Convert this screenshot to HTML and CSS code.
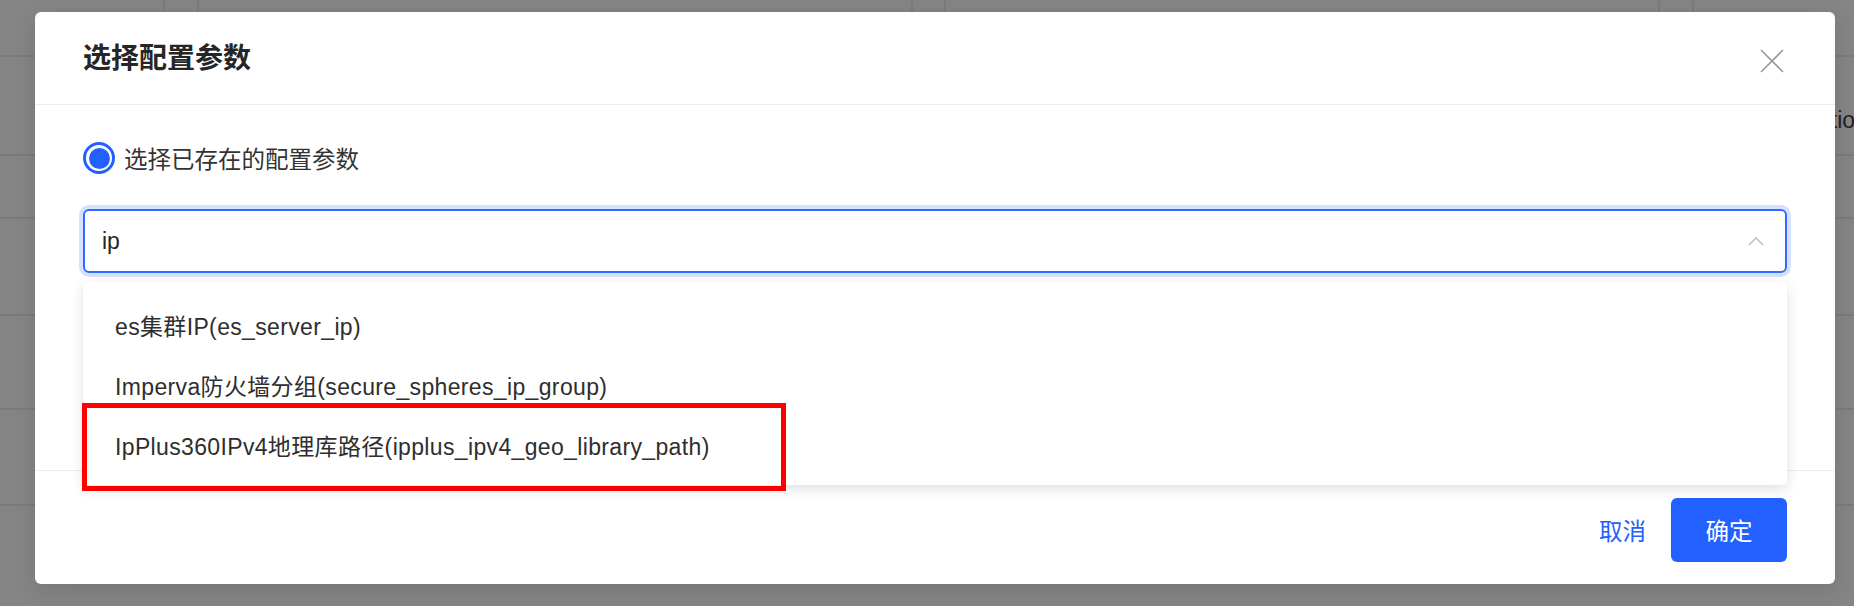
FILE: index.html
```html
<!DOCTYPE html>
<html lang="zh-CN">
<head>
<meta charset="utf-8">
<title>选择配置参数</title>
<link rel="stylesheet" href="styles.css">
</head>
<body>
<div class="backdrop">
  <div class="bg-row"><div class="c c1"></div><div class="c c2"></div><div class="c c3"></div><div class="c c4"></div><div class="c c5"></div><div class="c c6"></div><div class="c c7"></div></div>
  <div class="bg-row r2"><div class="c c1"></div><div class="c c2"></div><div class="c c3"></div><div class="c c4"></div><div class="c c5"></div><div class="c c6"></div><div class="c c7"><span class="bg-text">Action</span></div></div>
  <div class="bg-row r3"><div class="c c1"></div><div class="c c2"></div><div class="c c3"></div><div class="c c4"></div><div class="c c5"></div><div class="c c6"></div><div class="c c7"></div></div>
  <div class="bg-row r4"><div class="c c1"></div><div class="c c2"></div><div class="c c3"></div><div class="c c4"></div><div class="c c5"></div><div class="c c6"></div><div class="c c7"></div></div>
  <div class="bg-row r5"><div class="c c1"></div><div class="c c2"></div><div class="c c3"></div><div class="c c4"></div><div class="c c5"></div><div class="c c6"></div><div class="c c7"></div></div>
  <div class="bg-row r6"><div class="c c1"></div><div class="c c2"></div><div class="c c3"></div><div class="c c4"></div><div class="c c5"></div><div class="c c6"></div><div class="c c7"></div></div>
</div>

<div class="modal">
  <div class="modal-header">
    <div class="modal-title">选择配置参数</div>
    <svg class="close-icon" width="24" height="24" viewBox="0 0 24 24" aria-label="关闭">
      <path d="M1 1 L23 23 M23 1 L1 23" stroke="#9a9a9a" stroke-width="1.6" fill="none"/>
    </svg>
  </div>
  <div class="modal-body">
    <label class="radio-row">
      <span class="radio"><span class="radio-dot"></span></span>
      <span class="radio-label">选择已存在的配置参数</span>
    </label>
    <div class="select-wrap">
      <div class="select">
        <span class="select-value">ip</span>
        <svg class="chevron" width="16" height="10" viewBox="0 0 16 10">
          <path d="M1 9 L8 2 L15 9" stroke="#c2c2c2" stroke-width="1.6" fill="none"/>
        </svg>
      </div>
      <div class="dropdown">
        <div class="option">es集群IP(es_server_ip)</div>
        <div class="option">Imperva防火墙分组(secure_spheres_ip_group)</div>
        <div class="option">IpPlus360IPv4地理库路径(ipplus_ipv4_geo_library_path)</div>
        <div class="highlight"></div>
      </div>
    </div>
  </div>
  <div class="modal-footer">
    <button class="btn-cancel">取消</button>
    <button class="btn-ok">确定</button>
  </div>
</div>
</body>
</html>
```

FILE: styles.css
```css
html, body {
  margin: 0;
  padding: 0;
}
body {
  width: 1854px;
  height: 606px;
  overflow: hidden;
  background: #858585;
  font-family: "Liberation Sans", "Noto Sans CJK SC", sans-serif;
  position: relative;
}

/* dimmed page behind the dialog */
.backdrop {
  display: flex;
  flex-direction: column;
  width: 1854px;
  height: 606px;
}
.bg-row {
  display: grid;
  grid-template-columns: 165px 34px 714px 33px 714px 34px 160px;
  height: 57px;
  border-bottom: 2px solid #7b7b7b;
  box-sizing: border-box;
}
.bg-row.r2 { height: 99px; }
.bg-row.r3 { height: 63px; }
.bg-row.r4 { height: 97px; }
.bg-row.r5 { height: 94px; }
.bg-row.r6 { height: 96px; }
.c {
  border-right: 2px solid #7b7b7b;
}
.c7 { border-right: none; }
.bg-text {
  display: block;
  padding: 50px 0 0 110px;
  font-size: 23px;
  color: #222;
  line-height: 26px;
}

/* dialog */
.modal {
  position: absolute;
  left: 35px;
  top: 12px;
  width: 1800px;
  height: 572px;
  background: #fff;
  border-radius: 6px;
  box-shadow: 0 6px 24px rgba(0, 0, 0, 0.12);
  display: flex;
  flex-direction: column;
}
.modal-header {
  height: 93px;
  box-sizing: border-box;
  border-bottom: 1px solid #ebebf2;
  padding: 0 51px 0 48px;
  display: flex;
  align-items: center;
  justify-content: space-between;
}
.modal-title {
  font-family: "Noto Sans CJK SC", sans-serif;
  font-size: 28px;
  font-weight: 700;
  color: #262626;
  line-height: 32px;
  margin-top: -4px;
}
.close-icon {
  display: block;
  margin-top: 5px;
}

.modal-body {
  flex: 1;
  padding: 37px 48px 0;
}
.radio-row {
  display: flex;
  align-items: center;
  gap: 9px;
  height: 32px;
}
.radio {
  width: 32px;
  height: 32px;
  box-sizing: border-box;
  border: 3px solid #2260ff;
  border-radius: 50%;
  display: flex;
  align-items: center;
  justify-content: center;
}
.radio-dot {
  width: 21px;
  height: 21px;
  border-radius: 50%;
  background: #2260ff;
}
.radio-label {
  font-family: "Noto Sans CJK SC", sans-serif;
  font-size: 23.5px;
  line-height: 32px;
  color: #333;
}

.select-wrap {
  position: relative;
  margin-top: 35px;
}
.select {
  height: 64px;
  box-sizing: border-box;
  border: 2px solid #2f6bff;
  border-radius: 6px;
  box-shadow: 0 0 0 4px rgba(47, 107, 255, 0.2);
  padding: 0 21px 0 17px;
  display: flex;
  align-items: center;
  justify-content: space-between;
}
.select-value {
  font-size: 23px;
  color: #262626;
  line-height: 28px;
}
.chevron {
  display: block;
}

.dropdown {
  position: absolute;
  top: calc(100% + 9px);
  left: 0;
  right: 0;
  background: #fff;
  border-radius: 5px;
  box-shadow: 0 4px 14px rgba(0, 0, 0, 0.13);
  padding: 13px 0 10px;
  z-index: 2;
}
.option {
  height: 60px;
  display: flex;
  align-items: center;
  padding-left: 32px;
  font-size: 23px;
  letter-spacing: 0.35px;
  color: #2e2e2e;
  white-space: nowrap;
}
.highlight {
  position: absolute;
  left: -1px;
  top: 121px;
  width: 704px;
  height: 88px;
  box-sizing: border-box;
  border: 5px solid #ff0000;
}

.modal-footer {
  height: 114px;
  box-sizing: border-box;
  border-top: 1px solid #ebebf2;
  padding: 5px 48px 0;
  display: flex;
  align-items: center;
  justify-content: flex-end;
}
.btn-cancel {
  border: none;
  background: none;
  padding: 0;
  margin-right: 25px;
  font-family: "Noto Sans CJK SC", sans-serif;
  font-size: 23.5px;
  color: #2260ff;
  line-height: 32px;
  cursor: pointer;
}
.btn-ok {
  width: 116px;
  height: 64px;
  border: none;
  border-radius: 6px;
  background: #2260ff;
  color: #fff;
  font-family: "Noto Sans CJK SC", sans-serif;
  font-size: 23.5px;
  line-height: 32px;
  cursor: pointer;
}
```
